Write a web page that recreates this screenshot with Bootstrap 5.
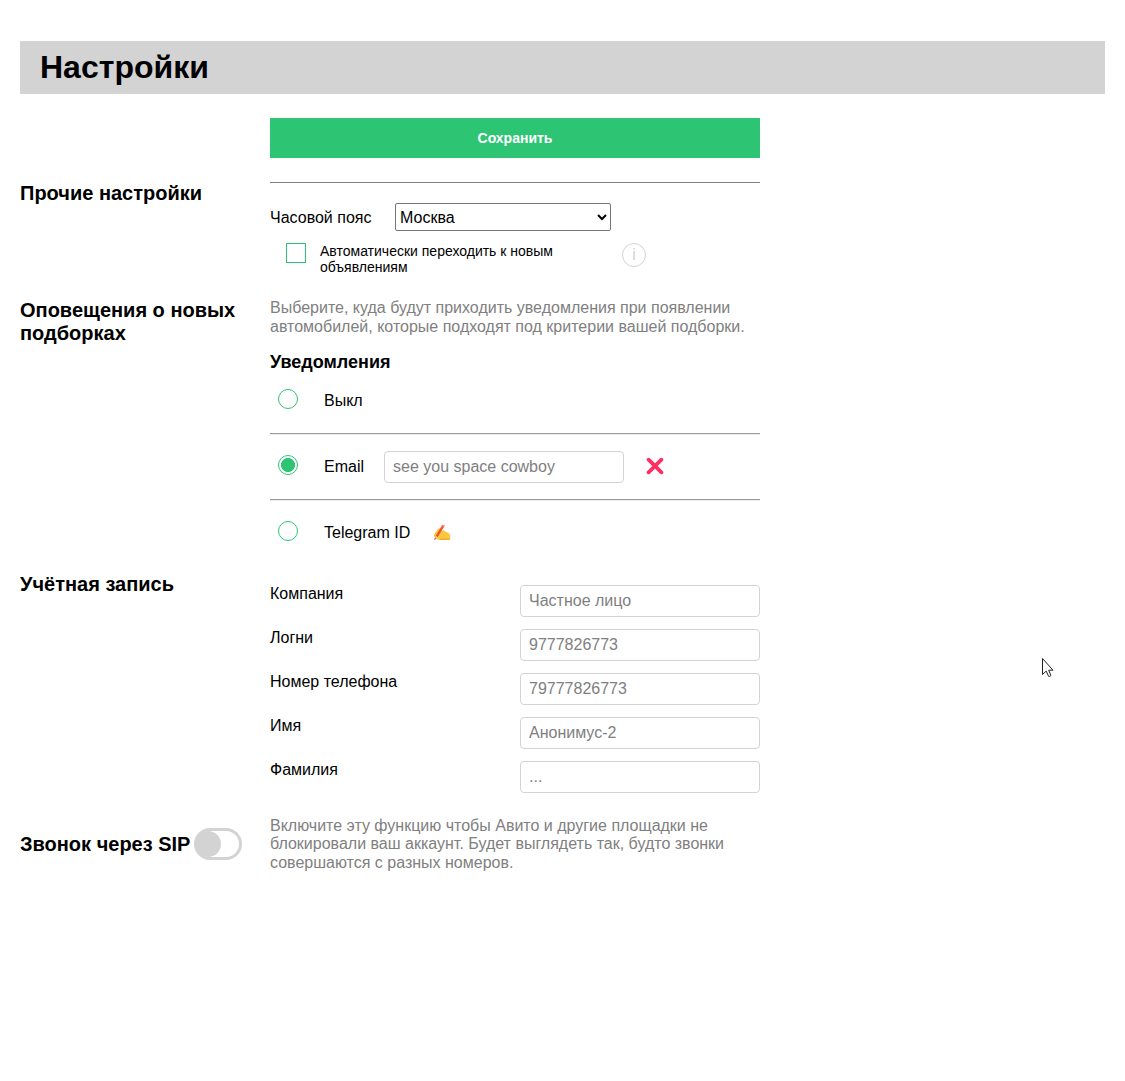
<!DOCTYPE html>
<html lang="ru">
<head>
<meta charset="utf-8">
<meta name="viewport" content="width=device-width, initial-scale=1">
<title>Настройки</title>
<link href="https://cdn.jsdelivr.net/npm/bootstrap@5.3.0/dist/css/bootstrap.min.css" rel="stylesheet">
<style>
  :root { --brand: #2dc574; --line: #d3d3d3; }
  body { font-family: "Liberation Sans", Arial, sans-serif; font-size: 16px; line-height: 18px; color: #000; background: #fff; min-height: 1081px; }
  .page-title { margin-top: 41px; height: 53px; padding-left: 20px; background: var(--line); font-size: 32px; line-height: 52px; font-weight: 700; }
  .section-name { width: 250px; font-size: 20px; line-height: 23px; font-weight: 700; margin: 0; white-space: nowrap; }
  .section-body { width: 490px; }
  .save-btn { height: 40px; background: var(--brand); color: #fff; font-size: 14px; font-weight: 700; line-height: 15px; }
  .save-btn:hover { background: #27ad66; color: #fff; }
  .sec-save { padding-top: 24px; height: 87px; }
  .sec-other { height: 118px; }
  .sec-other .section-name { padding-top: 1px; }
  .sec-alerts { height: 274px; }
  .sec-account { height: 244px; }
  .top-line { height: 1px; background: #808080; margin-top: 1px; }
  .zone-row { margin-top: 20px; height: 28px; }
  .zone-label { width: 125px; padding-top: 2px; }
  .zone-select { width: 216px; height: 28px; border: 1px solid #767676; border-radius: 2px; background: #fff; color: #000; font-size: 16px; }
  .auto-row { margin-top: 12px; padding-left: 16px; }
  .auto-box { width: 20px; height: 20px; margin: 0 14px 0 0; border: 1px solid var(--brand) !important; border-radius: 0 !important; }
  .auto-text { width: 302px; font-size: 14px; line-height: 16px; }
  .info-dot { width: 24px; height: 24px; border: 1px solid var(--line); color: var(--line); font-size: 16px; }
  .hint { color: #808080; line-height: 18.4px; }
  .sec-alerts .hint { line-height: 19px; margin-top: -1px; }
  .alerts-title { font-size: 18px; line-height: 20px; margin: 16px 0 0; font-weight: 700; }
  .choice { height: 65px; padding: 0 0 0 8px; }
  .choice.first-choice { height: 61px; padding-top: 2px; padding-bottom: 5px; }
  .choice .dot-radio { width: 20px; height: 20px; margin: -4px 26px 0 0; border: 1px solid var(--brand); background-color: #fff; }
  .choice .dot-radio:checked { border-color: var(--brand); background: radial-gradient(circle, var(--brand) 6.7px, #fff 7.3px); }
  .choice-line { height: 2px; border-top: 1px solid #9a9a9a; border-bottom: 1px solid #eee; margin-bottom: -1px; }
  .cross-icon { margin: 0 0 1px 22px; }
  .hand-icon { margin: 0 0 1px 0; }
  .field { width: 240px; height: 32px; border: 1px solid var(--line); border-radius: 4px; padding: 0 8px 1px; color: #808080; font-size: 16px; line-height: 18px; }
  .choice .field { padding-bottom: 0; }
  .account-body { padding-top: 12px; }
  .account-row { height: 44px; }
  .sip-name { padding-top: 11px; }
  .sip-switch { width: 48px; height: 32px; border: 3px solid var(--line); margin-left: 4px; }
  .sip-switch span { width: 26px; height: 26px; margin-left: -2px; background: var(--line); }
  .pointer { left: 1041px; top: 657px; }
</style>
<script src="https://cdn.jsdelivr.net/npm/bootstrap@5.3.0/dist/js/bootstrap.bundle.min.js"></script>
</head>
<body class="position-relative">
<main class="px-3 mx-1 overflow-hidden">
  <h1 class="page-title mb-0">Настройки</h1>

  <section class="d-flex sec-save">
    <div class="section-name"></div>
    <div class="section-body">
      <button type="button" class="btn save-btn w-100 rounded-0 border-0 p-0">Сохранить</button>
    </div>
  </section>

  <section class="d-flex sec-other">
    <h2 class="section-name">Прочие настройки</h2>
    <div class="section-body">
      <div class="top-line"></div>
      <div class="zone-row d-flex align-items-center">
        <label class="zone-label" for="zone">Часовой пояс</label>
        <select id="zone" class="zone-select"><option>Москва</option></select>
      </div>
      <div class="auto-row d-flex align-items-start">
        <input id="auto" type="checkbox" class="form-check-input flex-shrink-0 auto-box">
        <label for="auto" class="auto-text">Автоматически переходить к новым<br>объявлениям</label>
        <span class="info-dot rounded-circle d-flex align-items-center justify-content-center">i</span>
      </div>
    </div>
  </section>

  <section class="d-flex sec-alerts">
    <h2 class="section-name">Оповещения о новых<br>подборках</h2>
    <div class="section-body">
      <p class="hint mb-0">Выберите, куда будут приходить уведомления при появлении<br>автомобилей, которые подходят под критерии вашей подборки.</p>
      <h3 class="alerts-title">Уведомления</h3>
      <div class="choice first-choice d-flex align-items-center">
        <input id="n-off" name="notify" type="radio" class="form-check-input dot-radio">
        <label for="n-off">Выкл</label>
      </div>
      <div class="choice-line"></div>
      <div class="choice d-flex align-items-center">
        <input id="n-mail" name="notify" type="radio" class="form-check-input dot-radio" checked>
        <label for="n-mail" class="me-3 pe-1">Email</label>
        <input type="text" class="field" value="see you space cowboy" aria-label="Email">
        <svg class="cross-icon" width="18" height="18" viewBox="0 0 18 18" aria-hidden="true"><path d="M2.6 2.6 15.4 15.4M15.4 2.6 2.6 15.4" stroke="#ff2e63" stroke-width="3.7" stroke-linecap="round"/></svg>
      </div>
      <div class="choice-line"></div>
      <div class="choice d-flex align-items-center">
        <input id="n-tg" name="notify" type="radio" class="form-check-input dot-radio">
        <label for="n-tg" class="me-4">Telegram ID</label>
        <svg class="hand-icon" width="17" height="17" viewBox="0.8 0 17 17" aria-hidden="true">
          <path d="M0.8 10.500 5 4.800Q6 3.600 6.700 5L6 7.300l4-1.100q2.200-.2 2 1.500 2.200.2 4.100 2.100L17 11v4.500l-4.300.2H5Q2.800 15.700 3.200 14L.8 12.600Z" fill="#ffc83d"/>
          <path d="m6.500 15.300 10.200-.2" stroke="#e59b25" stroke-width="1" fill="none"/>
          <path d="m2.100 14.500.5-2.700L8.700 1.600l2.200 1.200L4.500 13.100Z" fill="#f4512c"/>
          <path d="M8.400 2 9.500.4l2.100 1.100-.9 1.700Z" fill="#ff8065"/>
          <path d="m2.500 12 2 1.100-2.100 1.500Z" fill="#ffd7b8"/>
          <path d="m1.300 14.200 1.900.3-1.900 1.400Z" fill="#6b2940"/>
        </svg>
      </div>
    </div>
  </section>

  <section class="d-flex sec-account">
    <h2 class="section-name">Учётная запись</h2>
    <div class="section-body account-body">
      <div class="account-row d-flex justify-content-between align-items-start"><label for="company">Компания</label><input id="company" class="field" value="Частное лицо"></div>
      <div class="account-row d-flex justify-content-between align-items-start"><label for="login">Логни</label><input id="login" class="field" value="9777826773"></div>
      <div class="account-row d-flex justify-content-between align-items-start"><label for="phone">Номер телефона</label><input id="phone" class="field" value="79777826773"></div>
      <div class="account-row d-flex justify-content-between align-items-start"><label for="first">Имя</label><input id="first" class="field" value="Анонимус-2"></div>
      <div class="account-row d-flex justify-content-between align-items-start"><label for="last">Фамилия</label><input id="last" class="field" value="..."></div>
    </div>
  </section>

  <section class="d-flex align-items-start">
    <h2 class="section-name sip-name d-flex align-items-center">Звонок через SIP<span class="sip-switch rounded-pill d-inline-flex align-items-center" role="switch" aria-checked="false"><span class="rounded-circle"></span></span></h2>
    <div class="section-body">
      <p class="hint mb-0">Включите эту функцию чтобы Авито и другие площадки не<br>блокировали ваш аккаунт. Будет выглядеть так, будто звонки<br>совершаются с разных номеров.</p>
    </div>
  </section>
</main>
<svg class="pointer position-absolute" width="14" height="22" viewBox="0 0 14 22" aria-hidden="true"><path d="M1.500 1.500v16l3.700-3.400 2.400 5.200q1.200.7 2.300-.8L7.700 13.200h4.300Z" fill="#fff" stroke="#222" stroke-width="1"/></svg>
</body>
</html>
